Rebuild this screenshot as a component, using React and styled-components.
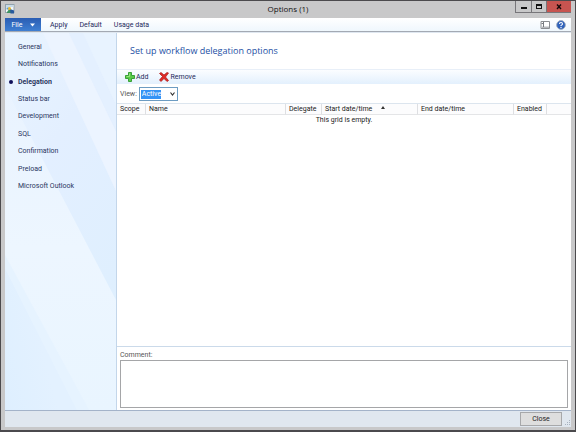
import React from "react";
import styled, { createGlobalStyle } from "styled-components";

const GlobalStyle = createGlobalStyle`
  *, *::before, *::after { box-sizing: border-box; }
  html, body { margin: 0; }
  body, button, select, textarea, table {
    font-family: Roboto, "Open Sans", sans-serif;
    font-size: 7px;
    line-height: 10px;
    color: #222;
  }
`;

const Window = styled.div`
  display: flex;
  flex-direction: column;
  min-height: 100vh;
  background: #c8c8c9;
  border: 1px solid #4b4a4d;
  border-bottom-width: 2px;
  padding: 0 4px 3px 4px;
`;

const TitleBar = styled.header`
  display: grid;
  grid-template-columns: 1fr auto 1fr;
  height: 17px;
`;

const AppIcon = styled.svg`
  width: 10px;
  height: 10px;
  margin-top: 3px;
`;

const WindowTitle = styled.h1`
  margin: 0;
  font-family: "Open Sans", sans-serif;
  font-size: 8px;
  font-weight: 400;
  line-height: 15px;
  color: #111;
`;

const WindowButtons = styled.div`
  display: flex;
  justify-self: end;
  height: 12px;
  border: 1px solid #77767a;
  border-top: 0;
  border-right: 0;
`;

const WindowButton = styled.button`
  display: flex;
  align-items: center;
  justify-content: center;
  width: ${(p) => (p.$danger ? 25 : 15)}px;
  padding: 0;
  border: 0;
  border-left: ${(p) => (p.$first ? 0 : 1)}px solid #77767a;
  background: ${(p) => (p.$danger ? "#c75450" : "#c8c8c9")};
`;

const Glyph = styled.svg`
  display: block;
  flex: none;
  width: ${(p) => p.$size}px;
  height: ${(p) => p.$size}px;
`;

const MenuBar = styled.nav`
  display: flex;
  align-items: stretch;
  height: 14px;
  background: linear-gradient(#ffffff, #eff7fd);
  border-bottom: 1px solid #a3a9b3;
`;

const FileButton = styled.button`
  display: flex;
  align-items: center;
  justify-content: center;
  gap: 7px;
  width: 36px;
  padding: 0;
  border: 0;
  color: #fff;
  background: linear-gradient(#2a5db3, #3f7fd2);
`;

const MenuButton = styled.button`
  margin-left: ${(p) => p.$gap}px;
  padding: 0;
  border: 0;
  background: none;
  color: #1f2a5c;
`;

const MenuTools = styled.div`
  display: flex;
  align-items: center;
  gap: 6px;
  margin-left: auto;
  padding-right: 5px;
`;

const IconButton = styled.button`
  padding: 0;
  border: 0;
  background: none;
`;

const Body = styled.div`
  display: flex;
  flex: 1;
  background: #fff;
  border-top: 1px solid #dfe7f0;
`;

const Sidebar = styled.aside`
  position: relative;
  width: 112px;
  flex: none;
  border-right: 1px solid #c3d6ea;
`;

const SidebarArt = styled.svg`
  position: absolute;
  inset: 0;
  width: 100%;
  height: 100%;
`;

const SidebarList = styled.ul`
  position: relative;
  display: grid;
  grid-auto-rows: 1fr;
  align-items: center;
  height: 157px;
  margin: 5px 0 0;
  padding: 0;
  list-style: none;
`;

const SidebarLink = styled.a`
  display: flex;
  align-items: center;
  color: #2a3560;
  font-weight: ${(p) => (p.$active ? 700 : 400)};
  text-decoration: none;

  &::before {
    content: "";
    width: 4px;
    height: 4px;
    margin: 0 5px 0 4px;
    border-radius: 50%;
    background: ${(p) => (p.$active ? "#10105a" : "transparent")};
  }
`;

const Main = styled.main`
  display: flex;
  flex: 1;
  flex-direction: column;
  min-width: 0;
`;

const Heading = styled.h2`
  margin: 0;
  padding: 0 13px;
  height: 36px;
  font-family: "Open Sans", sans-serif;
  font-size: 9px;
  font-weight: 400;
  line-height: 35px;
  color: #2450a4;
`;

const Toolbar = styled.div`
  display: flex;
  gap: 11px;
  height: 15px;
  padding-left: 8px;
  border-top: 1px solid #e8eff8;
  background: linear-gradient(#fbfdff, #e3f0fd);
`;

const ToolButton = styled.button`
  display: flex;
  align-items: center;
  gap: 1px;
  padding: 0;
  border: 0;
  background: none;
  color: #1f2a5c;
`;

const ViewRow = styled.div`
  display: flex;
  align-items: center;
  gap: 2px;
  height: 19px;
  padding-left: 3px;
`;

const FieldLabel = styled.label`
  color: #555;
`;

const SelectBox = styled.div`
  position: relative;
  display: flex;
`;

const ViewSelect = styled.select`
  appearance: none;
  width: 39px;
  height: 14px;
  padding: 0 12px 0 2px;
  border: 1px solid #6d9cc2;
  border-radius: 0;
  outline: 0;
  color: #fff;
  background: linear-gradient(#3493f5, #3493f5) 1px 2px / 20px 9px no-repeat #fff;

  option { color: #222; }
`;

const Chevron = styled.svg`
  position: absolute;
  right: 3px;
  top: 5px;
  width: 5px;
  height: 4px;
  pointer-events: none;
`;

const GridTable = styled.table`
  width: 100%;
  table-layout: fixed;
  border-collapse: separate;
  border-spacing: 0;
  border-top: 1px solid #dce5ee;
`;

const HeadCell = styled.th`
  width: ${(p) => (p.$width ? `${p.$width}px` : "auto")};
  height: 11px;
  padding: 0 0 0 3px;
  border-right: ${(p) => (p.$last ? 0 : 1)}px solid #dedfe2;
  border-bottom: 1px solid #e4e5e7;
  background: #fcfcfd;
  font-weight: 400;
  text-align: left;
  white-space: nowrap;
`;

const SortMark = styled.svg`
  width: 4px;
  height: 3px;
  margin-left: 9px;
  vertical-align: 2px;
`;

const EmptyCell = styled.td`
  padding: 0;
  text-align: center;
`;

const CommentPane = styled.section`
  display: flex;
  flex-direction: column;
  margin-top: auto;
  padding: 3px 3px 2px;
  border-top: 1px solid #cbdaea;
`;

const CommentBox = styled.textarea`
  display: block;
  width: 100%;
  height: 48px;
  border: 1px solid #a5a6a8;
  border-radius: 0;
  resize: none;
`;

const Footer = styled.footer`
  display: flex;
  align-items: center;
  justify-content: flex-end;
  gap: 2px;
  height: 17px;
  border-top: 1px solid #a4b3c9;
  background: #e0e7ef;
`;

const CloseButton = styled.button`
  width: 42px;
  height: 14px;
  padding: 0;
  border: 1px solid #a7a8aa;
  background: #dedede;
`;

const ResizeGrip = styled.svg`
  align-self: flex-end;
  width: 7px;
  height: 8px;
`;

const pages = [
  "General", "Notifications", "Delegation", "Status bar", "Development",
  "SQL", "Confirmation", "Preload", "Microsoft Outlook",
];

const columns = [
  { label: "Scope", width: 29 },
  { label: "Name" },
  { label: "Delegate", width: 36 },
  { label: "Start date/time", width: 96, sorted: true },
  { label: "End date/time", width: 96 },
  { label: "Enabled", width: 33 },
  { label: "", width: 24 },
];

function Backdrop() {
  return (
    <SidebarArt viewBox="0 0 111 377" preserveAspectRatio="none" aria-hidden="true">
      <defs>
        <linearGradient id="upper" x1="0" y1="0" x2="0.400" y2="1">
          <stop offset="0" stopColor="#e9f4ff" />
          <stop offset="0.400" stopColor="#e3efff" />
          <stop offset="1" stopColor="#deeffe" />
        </linearGradient>
        <linearGradient id="pale" x1="0" y1="0" x2="0" y2="1">
          <stop offset="0" stopColor="#e9f3ff" />
          <stop offset="0.500" stopColor="#edf6ff" />
          <stop offset="1" stopColor="#e9f5ff" />
        </linearGradient>
        <linearGradient id="fade" x1="0" y1="1" x2="0.600" y2="0.700">
          <stop offset="0" stopColor="#deefff" />
          <stop offset="1" stopColor="#e3f1ff" />
        </linearGradient>
      </defs>
      <rect width="111" height="377" fill="url(#upper)" />
      <path d="M0 54L111 267V377H0Z" fill="url(#pale)" />
      <path d="M38 0H64L111 98V158Z" fill="#ecf4ff" />
      <path d="M64 0H78L111 72V98Z" fill="#e4f0ff" />
      <path d="M78 0H111V72Z" fill="#e8f3ff" />
      <path d="M0 222L84 377H72L0 235Z" fill="#e6f3ff" />
      <path d="M0 235L72 377H0Z" fill="url(#fade)" />
    </SidebarArt>
  );
}

export default function App() {
  return (
    <>
      <GlobalStyle />
      <Window>
        <TitleBar>
          <AppIcon viewBox="0 0 10 10" aria-hidden="true">
            <rect x="0.500" y="0.500" width="8.500" height="8" fill="#f4f7f8" stroke="#92a2ad" />
            <path d="M1 1H8.500V3H1Z" fill="#c8dce8" />
            <path d="M1.500 3.500H4V5.500H1.500Z" fill="#5a9ed0" />
            <path d="M2 8L5 4L7 7V9H2Z" fill="#3b9360" />
            <path d="M5 5L9 6.500V9.500H5.500Z" fill="#285a9e" />
            <circle cx="4.500" cy="4.500" r="1.500" fill="#e8b833" />
          </AppIcon>
          <WindowTitle>Options (1)</WindowTitle>
          <WindowButtons>
            <WindowButton type="button" aria-label="Minimize" $first>
              <Glyph $size={8} viewBox="0 0 8 8"><path d="M1 4H7V6H1Z" fill="#111" /></Glyph>
            </WindowButton>
            <WindowButton type="button" aria-label="Maximize">
              <Glyph $size={8} viewBox="0 0 8 8">
                <path d="M1 1H7V6H1ZM2 3V5H6V3Z" fill="#111" fillRule="evenodd" />
              </Glyph>
            </WindowButton>
            <WindowButton type="button" aria-label="Close window" $danger>
              <Glyph $size={8} viewBox="0 0 8 8"><path d="M2 1.500L6 6M6 1.500L2 6" stroke="#160808" strokeWidth="1.400" /></Glyph>
            </WindowButton>
          </WindowButtons>
        </TitleBar>
        <MenuBar>
          <FileButton type="button">
            File
            <Glyph $size={5} viewBox="0 0 5 5"><path d="M0 1.500H5L2.500 4.500Z" fill="#fff" /></Glyph>
          </FileButton>
          <MenuButton type="button" $gap={9}>Apply</MenuButton>
          <MenuButton type="button" $gap={12}>Default</MenuButton>
          <MenuButton type="button" $gap={12}>Usage data</MenuButton>
          <MenuTools>
            <IconButton type="button" aria-label="Layout">
              <Glyph $size={10} viewBox="0 0 10 10">
                <path d="M1 1.500H9.500V8.500H1Z" fill="#fff" stroke="#8b8e92" />
                <path d="M1.500 6.500H9V8H1.500Z" fill="#b5b8bc" />
                <path d="M3.500 2V7M1.500 3.500H3" stroke="#777b80" fill="none" />
              </Glyph>
            </IconButton>
            <IconButton type="button" aria-label="Help">
              <Glyph $size={10} viewBox="0 0 10 10">
                <circle cx="5" cy="5" r="4.400" fill="#2f62bb" stroke="#a3aebd" strokeWidth="0.900" />
                <path d="M3.500 4Q3.500 2.500 5 2.500T6.500 4Q6.500 4.700 5 5.500V6" fill="none" stroke="#fff" strokeWidth="1.100" />
                <circle cx="5" cy="7.500" r="0.700" fill="#fff" />
              </Glyph>
            </IconButton>
          </MenuTools>
        </MenuBar>
        <Body>
          <Sidebar>
            <Backdrop />
            <SidebarList>
              {pages.map((page) => (
                <li key={page}>
                  <SidebarLink href="#" $active={page === "Delegation"}>{page}</SidebarLink>
                </li>
              ))}
            </SidebarList>
          </Sidebar>
          <Main>
            <Heading>Set up workflow delegation options</Heading>
            <Toolbar>
              <ToolButton type="button">
                <Glyph $size={10} viewBox="0 0 10 10">
                  <path d="M3.500 0.500H6.500V3.500H9.500V6.500H6.500V9.500H3.500V6.500H0.500V3.500H3.500Z" fill="#5ccb49" stroke="#2c9a2d" strokeWidth="0.900" />
                  <path d="M4.500 1.500V4.500H1.500" fill="none" stroke="#a4ea8e" strokeWidth="0.800" />
                </Glyph>
                Add
              </ToolButton>
              <ToolButton type="button">
                <Glyph $size={10} viewBox="0 0 10 10">
                  <path d="M0.500 1.500L2 0.500L5 3L8 0.500L9.500 1L6.500 5L9.500 8.500L8 9.500L5 6.500L2 9.500L0.500 8L3.500 4.500Z" fill="#e02d28" stroke="#a81717" strokeWidth="0.700" />
                </Glyph>
                Remove
              </ToolButton>
            </Toolbar>
            <ViewRow>
              <FieldLabel htmlFor="view">View:</FieldLabel>
              <SelectBox>
                <ViewSelect id="view" defaultValue="Active">
                  <option>Active</option>
                </ViewSelect>
                <Chevron viewBox="0 0 5 4" aria-hidden="true">
                  <path d="M0.500 0.500L2.500 3L4.500 0.500" fill="none" stroke="#333" strokeWidth="1.200" />
                </Chevron>
              </SelectBox>
            </ViewRow>
            <GridTable>
              <thead>
                <tr>
                  {columns.map((c) => (
                    <HeadCell key={c.label} $width={c.width} $last={!c.label}>
                      {c.label}
                      {c.sorted && (
                        <SortMark viewBox="0 0 4 3" aria-hidden="true"><path d="M0 3L2 0L4 3Z" fill="#333" /></SortMark>
                      )}
                    </HeadCell>
                  ))}
                </tr>
              </thead>
              <tbody>
                <tr><EmptyCell colSpan={columns.length}>This grid is empty.</EmptyCell></tr>
              </tbody>
            </GridTable>
            <CommentPane>
              <FieldLabel htmlFor="comment">Comment:</FieldLabel>
              <CommentBox id="comment" />
            </CommentPane>
          </Main>
        </Body>
        <Footer>
          <CloseButton type="button">Close</CloseButton>
          <ResizeGrip viewBox="0 0 7 8" aria-hidden="true">
            <path d="M5 1H6V2H5ZM3 3H4V4H3ZM5 3H6V4H5ZM1 5H2V6H1ZM3 5H4V6H3ZM5 5H6V6H5Z" fill="#a9b3c0" />
          </ResizeGrip>
        </Footer>
      </Window>
    </>
  );
}
